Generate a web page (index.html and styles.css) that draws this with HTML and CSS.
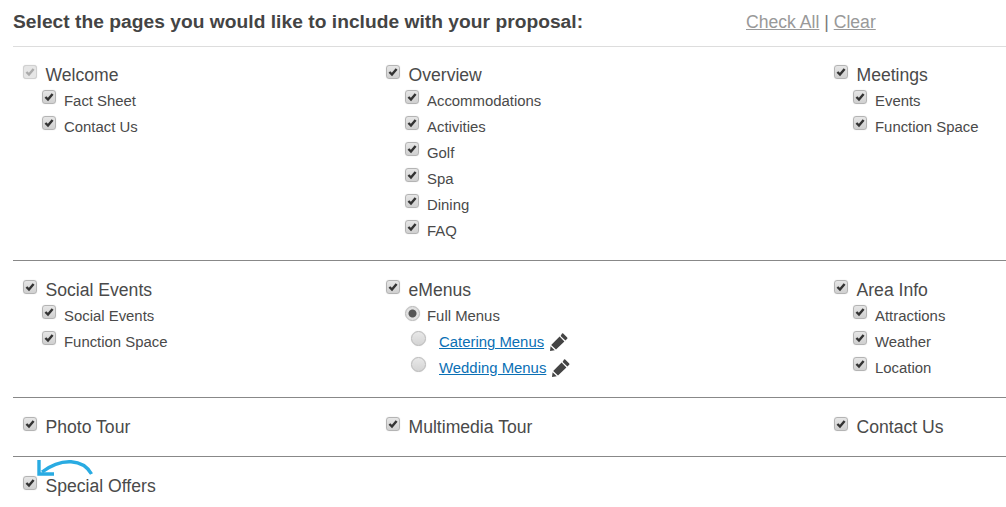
FILE: index.html
```html
<!DOCTYPE html>
<html lang="en">
<head>
<meta charset="utf-8">
<title>Proposal pages</title>
<link rel="stylesheet" href="styles.css">
</head>
<body>
<svg class="defs" width="0" height="0" aria-hidden="true">
  <symbol id="tick" viewBox="0 0 14 14"><path d="M2.8 7 L5.8 10 L11.2 3.4" fill="none" stroke="currentColor" stroke-width="2.8"/></symbol>
  <symbol id="pencil" viewBox="0 0 18 18"><path d="M13.2 .6 L17.2 4.4 Q17.8 5.1 17.2 5.8 L15.4 7.6 L10.6 3 L12 .6 Q12.6 .1 13.2 .6 Z M9.6 3.6 L14.4 8.6 L6 16.6 L1.2 12 Z M.6 13.2 L4.8 17.3 L0 18 Z" fill="currentColor"/></symbol>
</svg>
<main class="page">
  <header class="head">
    <h1 class="title">Select the pages you would like to include with your proposal:</h1>
    <div class="actions"><a href="#">Check All</a> | <a href="#">Clear</a></div>
  </header>

  <section class="row first">
    <div class="col col-a">
      <div class="item"><span class="box muted"><svg><use href="#tick"/></svg></span>Welcome</div>
      <div class="sub"><span class="box"><svg><use href="#tick"/></svg></span>Fact Sheet</div>
      <div class="sub"><span class="box"><svg><use href="#tick"/></svg></span>Contact Us</div>
    </div>
    <div class="col col-b">
      <div class="item"><span class="box"><svg><use href="#tick"/></svg></span>Overview</div>
      <div class="sub"><span class="box"><svg><use href="#tick"/></svg></span>Accommodations</div>
      <div class="sub"><span class="box"><svg><use href="#tick"/></svg></span>Activities</div>
      <div class="sub"><span class="box"><svg><use href="#tick"/></svg></span>Golf</div>
      <div class="sub"><span class="box"><svg><use href="#tick"/></svg></span>Spa</div>
      <div class="sub"><span class="box"><svg><use href="#tick"/></svg></span>Dining</div>
      <div class="sub"><span class="box"><svg><use href="#tick"/></svg></span>FAQ</div>
    </div>
    <div class="col">
      <div class="item"><span class="box"><svg><use href="#tick"/></svg></span>Meetings</div>
      <div class="sub"><span class="box"><svg><use href="#tick"/></svg></span>Events</div>
      <div class="sub"><span class="box"><svg><use href="#tick"/></svg></span>Function Space</div>
    </div>
  </section>

  <section class="row">
    <div class="col col-a">
      <div class="item"><span class="box"><svg><use href="#tick"/></svg></span>Social Events</div>
      <div class="sub"><span class="box"><svg><use href="#tick"/></svg></span>Social Events</div>
      <div class="sub"><span class="box"><svg><use href="#tick"/></svg></span>Function Space</div>
    </div>
    <div class="col col-b">
      <div class="item"><span class="box"><svg><use href="#tick"/></svg></span>eMenus</div>
      <div class="sub"><span class="radio on"></span>Full Menus</div>
      <div class="sub opt"><span class="radio"></span><a href="#">Catering Menus</a><svg class="pen"><use href="#pencil"/></svg></div>
      <div class="sub opt"><span class="radio"></span><a href="#">Wedding Menus</a><svg class="pen"><use href="#pencil"/></svg></div>
    </div>
    <div class="col">
      <div class="item"><span class="box"><svg><use href="#tick"/></svg></span>Area Info</div>
      <div class="sub"><span class="box"><svg><use href="#tick"/></svg></span>Attractions</div>
      <div class="sub"><span class="box"><svg><use href="#tick"/></svg></span>Weather</div>
      <div class="sub"><span class="box"><svg><use href="#tick"/></svg></span>Location</div>
    </div>
  </section>

  <section class="row">
    <div class="col col-a">
      <div class="item"><span class="box"><svg><use href="#tick"/></svg></span>Photo Tour</div>
    </div>
    <div class="col col-b">
      <div class="item"><span class="box"><svg><use href="#tick"/></svg></span>Multimedia Tour</div>
    </div>
    <div class="col">
      <div class="item"><span class="box"><svg><use href="#tick"/></svg></span>Contact Us</div>
    </div>
  </section>

  <section class="row last">
    <div class="col col-a">
      <div class="item"><span class="box"><svg><use href="#tick"/></svg></span>Special Offers</div>
    </div>
    <svg class="arrow" viewBox="0 0 60 24" width="60" height="24"><path d="M55.5 18 C47 3 26 1 6 16" fill="none" stroke="#29abe2" stroke-width="3.4"/><path d="M3 4 V18 H18" fill="none" stroke="#29abe2" stroke-width="3.4"/></svg>
  </section>
</main>
</body>
</html>
```
FILE: styles.css
```css
* { box-sizing: border-box; }
html, body { margin: 0; padding: 0; }
body {
  background: #fff;
  color: #4a4a4a;
  font-family: "Liberation Sans", Arial, sans-serif;
  overflow: hidden;
}
.defs { position: absolute; }
.page { margin-left: 13px; height: 507px; }
.head {
  display: flex;
  align-items: center;
  height: 47px;
  padding-bottom: 2px;
  border-bottom: 1px solid #ddd;
}
.title {
  margin: 0;
  width: 733px;
  font-size: 19.2px;
  font-weight: 700;
  letter-spacing: 0.03px;
  color: #444;
}
.actions { font-size: 17.6px; color: #777; }
.actions a { color: #999; text-decoration: underline; }
.row {
  position: relative;
  display: flex;
  padding: 16px 0 17px 10px;
  border-bottom: 1px solid #888;
}
.row.first { padding-top: 15px; }
.row.last { border-bottom: 0; }
.col-a { width: 363px; }
.col-b { width: 448px; }
.item {
  display: flex;
  align-items: center;
  height: 25px;
  padding-top: 2px;
  font-size: 17.6px;
}
.sub {
  display: flex;
  align-items: center;
  height: 26px;
  padding-top: 2px;
  padding-left: 19px;
  font-size: 14.9px;
}
.box {
  flex: none;
  width: 14px;
  height: 14px;
  margin: -9px 8px 0 0;
  border: 1px solid #b4b4b4;
  border-radius: 3px;
  background: linear-gradient(#e6e6e6, #d0d0d0);
  box-shadow: 0 0 1px #ccc;
  color: #333;
}
.item .box { margin: -7px 8.5px 0 0; }
.box svg { display: block; width: 12px; height: 12px; }
.box.muted { color: #aaa; border-color: #d0d0d0; background: #e6e6e6; }
.radio {
  flex: none;
  width: 15px;
  height: 15px;
  margin: -6px 7px 0 0;
  border: 1px solid #b8b8b8;
  border-radius: 50%;
  background: linear-gradient(#e8e8e8, #d4d4d4);
  box-shadow: 0 0 1px #ccc;
}
.radio.on { background: radial-gradient(circle, #555 0 3.5px, #e0e0e0 4.5px); }
.opt .radio { margin: -8px 13px 0 6px; }
.opt a { color: #0b70b5; text-decoration: underline; }
.pen { width: 18px; height: 18px; margin-left: 6px; color: #444; }
.arrow { position: absolute; left: 23px; top: -1px; }
```
